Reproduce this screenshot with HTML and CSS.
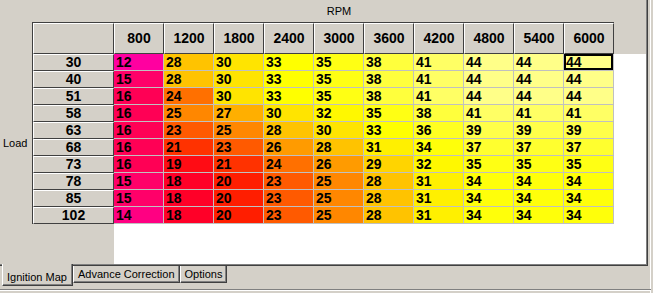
FILE: index.html
```html
<!DOCTYPE html>
<html lang="en">
<head>
    <meta charset="UTF-8">
    <title>Ignition Map</title>
    <link rel="stylesheet" href="styles.css">
</head>
<body>
<div class="window">
    <div class="page">
        <div class="axis-x">RPM</div>
        <div class="axis-y">Load</div>
        <div class="sheet">
            <div class="corner"><div class="fixed"></div></div>
            <div class="col-heads"><div class="strip" id="colHeads"></div></div>
            <div class="row-heads"><div class="strip" id="rowHeads"></div></div>
            <div class="body"><div class="cells" id="cells"></div></div>
        </div>
    </div>
    <div class="tabs">
        <div class="tab active">Ignition Map</div>
        <div class="tab">Advance Correction</div>
        <div class="tab">Options</div>
    </div>
    <div class="statusbar"></div>
</div>
<script src="app.js"></script>
</body>
</html>
```

FILE: styles.css
```css
body {
    margin: 0;
    background-color: #d4d0c8;
    font-family: 'Liberation Sans', Arial, sans-serif;
    font-size: 11px;
    color: #000;
}
.window {
    width: 653px;
    height: 293px;
    overflow: hidden;
    box-shadow: inset -2px 0 #d4d0c8, inset -3px 0 #fff;
}
.page {
    box-sizing: border-box;
    width: 648px;
    height: 266px;
    padding: 0 1px 1px 0;
    border-right: 1px solid #404040;
    border-bottom: 1px solid #404040;
    box-shadow: inset -1px -1px #808080;
    display: grid;
    grid-template-columns: 32px 1fr;
    grid-template-rows: 22px 1fr;
}
.axis-x {
    grid-column: 2;
    grid-row: 1;
    text-align: center;
    line-height: 22px;
}
.axis-y {
    grid-column: 1;
    grid-row: 2;
    display: flex;
    align-items: center;
    padding-left: 3px;
}
.sheet {
    grid-column: 2;
    grid-row: 2;
    display: grid;
    grid-template-columns: 82px 1fr;
    grid-template-rows: 32px 1fr;
    font-size: 14px;
    font-weight: bold;
}
.fixed {
    box-sizing: border-box;
    border: 1px solid;
    border-color: #fff #404040 #404040 #fff;
    text-align: center;
}
.corner {
    border-top: 1px solid #404040;
    border-left: 1px solid #404040;
}
.corner .fixed {
    height: 31px;
}
.col-heads .strip {
    display: flex;
    border-top: 1px solid #404040;
    width: max-content;
}
.col-heads .fixed {
    width: 50px;
    height: 31px;
    line-height: 29px;
}
.row-heads .strip {
    border-left: 1px solid #404040;
}
.row-heads .fixed {
    width: 81px;
    height: 17px;
    line-height: 15px;
}
.body {
    background-color: #fff;
}
.cells {
    display: grid;
    grid-template-columns: repeat(10, 50px);
    grid-auto-rows: 17px;
}
.cell {
    box-sizing: border-box;
    border-right: 1px solid #c0c0c0;
    border-bottom: 1px solid #c0c0c0;
    padding: 1px 0 0 2px;
    line-height: 15px;
}
.cell.focus {
    box-shadow: inset 0 0 0 2px #000;
}
.tabs {
    display: flex;
    align-items: flex-start;
    height: 20px;
    padding-left: 2px;
}
.tab {
    padding: 2px 4px 1px;
    line-height: 13px;
    white-space: nowrap;
    border-left: 1px solid #fff;
    border-right: 1px solid #404040;
    border-bottom: 1px solid #404040;
    box-shadow: inset -1px -1px #808080;
    background-color: #d4d0c8;
}
.tab.active {
    position: relative;
    box-sizing: border-box;
    height: 22px;
    margin-top: -2px;
    padding: 7px 5px 1px 4px;
}
.statusbar {
    margin-top: 3px;
    width: 651px;
    height: 4px;
    border-top: 1px solid #808080;
    box-shadow: inset 0 1px #fff;
}
```

FILE: app.js
```js
var rpm = [800, 1200, 1800, 2400, 3000, 3600, 4200, 4800, 5400, 6000];
var map = [
    [30,  [12, 28, 30, 33, 35, 38, 41, 44, 44, 44]],
    [40,  [15, 28, 30, 33, 35, 38, 41, 44, 44, 44]],
    [51,  [16, 24, 30, 33, 35, 38, 41, 44, 44, 44]],
    [58,  [16, 25, 27, 30, 32, 35, 38, 41, 41, 41]],
    [63,  [16, 23, 25, 28, 30, 33, 36, 39, 39, 39]],
    [68,  [16, 21, 23, 26, 28, 31, 34, 37, 37, 37]],
    [73,  [16, 19, 21, 24, 26, 29, 32, 35, 35, 35]],
    [78,  [15, 18, 20, 23, 25, 28, 31, 34, 34, 34]],
    [85,  [15, 18, 20, 23, 25, 28, 31, 34, 34, 34]],
    [102, [14, 18, 20, 23, 25, 28, 31, 34, 34, 34]]
];

// advance -> colour, pink at low advance through red/orange to pale yellow
var stops = [
    [12, 255, 0, 160], [14, 255, 0, 130], [15, 255, 0, 105], [16, 255, 0, 85],
    [18, 255, 0, 40], [19, 255, 12, 20], [20, 255, 30, 0], [21, 255, 50, 0],
    [23, 255, 90, 0], [24, 255, 112, 0], [25, 255, 135, 0], [26, 255, 155, 0],
    [27, 255, 175, 0], [28, 255, 195, 0], [29, 255, 212, 0], [30, 255, 228, 0],
    [31, 255, 240, 0], [33, 255, 255, 0], [35, 255, 255, 20], [38, 255, 255, 60],
    [41, 255, 255, 100], [44, 255, 255, 136]
];

function heat(v) {
    for (var i = 1; i < stops.length; i++) {
        if (v <= stops[i][0]) {
            var a = stops[i - 1], b = stops[i];
            var t = (v - a[0]) / (b[0] - a[0]);
            var c = [1, 2, 3].map(function (k) { return Math.round(a[k] + (b[k] - a[k]) * t); });
            return 'rgb(' + c.join(',') + ')';
        }
    }
    return 'rgb(255,255,136)';
}

var colHeads = document.getElementById('colHeads');
rpm.forEach(function (r) {
    var d = document.createElement('div');
    d.className = 'fixed';
    d.textContent = r;
    colHeads.appendChild(d);
});

var rowHeads = document.getElementById('rowHeads');
var cells = document.getElementById('cells');
map.forEach(function (row, ri) {
    var h = document.createElement('div');
    h.className = 'fixed';
    h.textContent = row[0];
    rowHeads.appendChild(h);

    row[1].forEach(function (v, ci) {
        var c = document.createElement('div');
        c.className = 'cell';
        if (ri === 0 && ci === rpm.length - 1) c.className += ' focus';
        c.style.backgroundColor = heat(v);
        c.textContent = v;
        cells.appendChild(c);
    });
});
```
